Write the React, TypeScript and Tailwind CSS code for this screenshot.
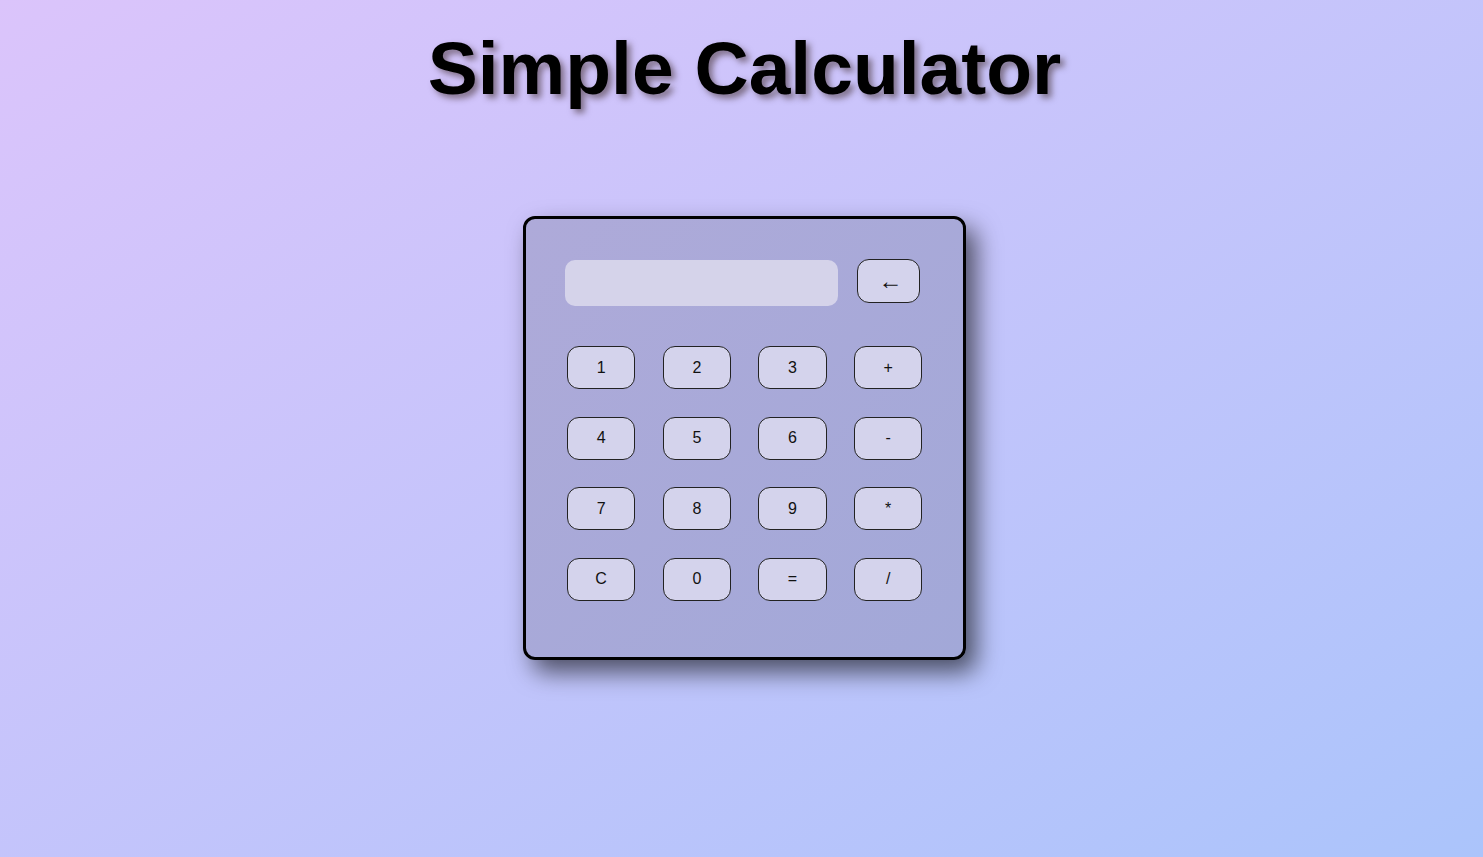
import React from "react";

const keys = ["1", "2", "3", "+", "4", "5", "6", "-", "7", "8", "9", "*", "C", "0", "=", "/"];

export default function App() {
  return (
    <div
      className="min-h-[857px] w-full flex flex-col items-center pl-[6px] bg-gradient-to-br from-[#dbc4fb] to-[#abc4fb]"
      style={{ fontFamily: '"Liberation Sans", Arial, sans-serif' }}
    >
      <h1 className="mt-[24px] text-[75px] leading-[88px] font-bold text-black [text-shadow:4px_4px_6px_rgba(60,40,40,0.55)]">
        Simple Calculator
      </h1>
      <div className="mt-[104px] w-[443px] h-[444px] rounded-[12px] border-[3px] border-black bg-gradient-to-br from-[#aeaad9] to-[#a2a8d8] shadow-[10px_12px_24px_rgba(0,0,0,0.6)]">
        <div className="flex items-start mt-[40px] ml-[39px]">
          <div className="mt-[1px] w-[273px] h-[46px] rounded-[10px] bg-[#d5d3ea]" />
          <button className="ml-[19px] w-[63px] h-[44px] rounded-[12px] border border-[#222] bg-[#d4d3ec] text-[24px] leading-none pl-[4px] pb-[1px] text-[#111] flex items-center justify-center">
            ←
          </button>
        </div>
        <div className="mt-[40px] ml-[41px] grid grid-cols-[repeat(4,68.3px)] gap-x-[27.4px] gap-y-[27.6px]">
          {keys.map((k) => (
            <button
              key={k}
              className="h-[43px] rounded-[12px] border border-[#222] bg-[#d4d3ec] text-[16px] text-[#111] flex items-center justify-center"
            >
              {k}
            </button>
          ))}
        </div>
      </div>
    </div>
  );
}
